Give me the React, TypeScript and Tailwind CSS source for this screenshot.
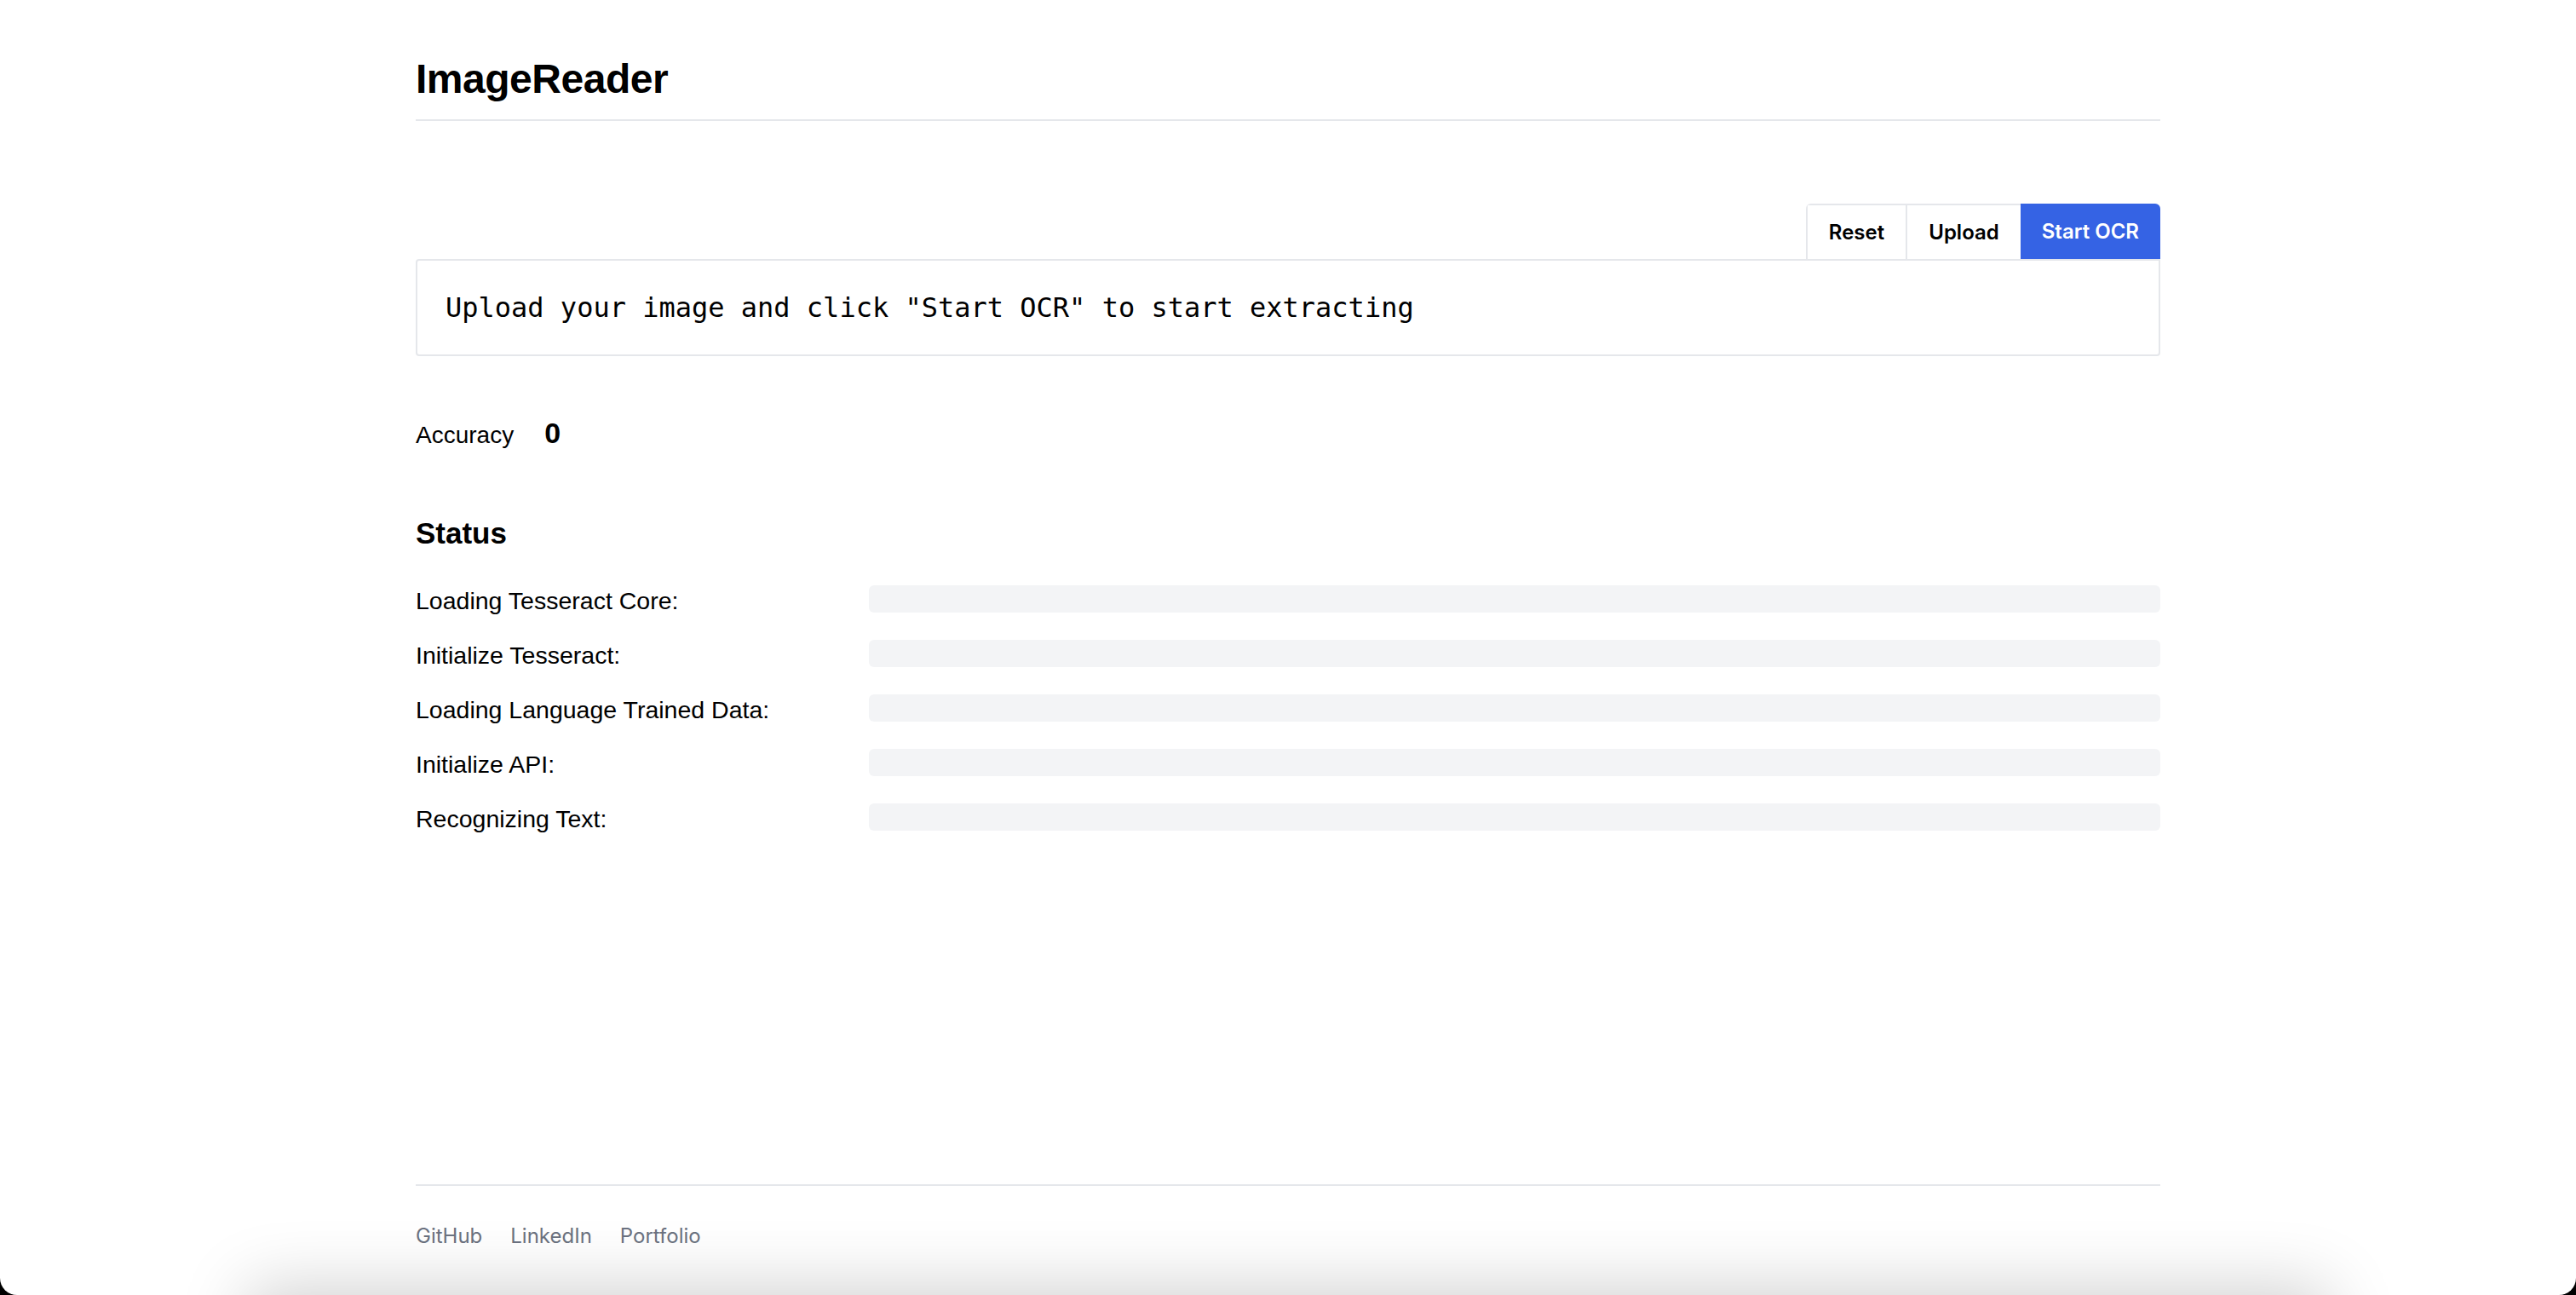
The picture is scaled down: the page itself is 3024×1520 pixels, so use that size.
import React from 'react'

const steps = [
  'Loading Tesseract Core:',
  'Initialize Tesseract:',
  'Loading Language Trained Data:',
  'Initialize API:',
  'Recognizing Text:'
]

const links = ['GitHub', 'LinkedIn', 'Portfolio']

const App: React.FC = () => {
  return (
    <div className="min-h-screen bg-black">
      <div className="relative flex h-[1520px] flex-col overflow-hidden rounded-b-[20px] bg-white font-['Liberation_Sans',Arial,sans-serif] text-black">
        <div className="mx-auto flex w-[2048px] flex-1 flex-col">
          <header className="border-b-2 border-[#e5e7eb] pt-[69px] pb-[23px]">
            <h1 className="text-[48px] font-bold leading-[48px] tracking-[-0.01em]">ImageReader</h1>
          </header>

          <div className="mt-[97px] flex justify-end">
            <div className="flex overflow-hidden rounded-t-[6px] font-['Inter',sans-serif]">
              <button className="flex h-[65px] items-center border-t-2 border-l-2 border-[#e5e7eb] px-[25px] text-[24px] font-semibold leading-[24px]">
                Reset
              </button>
              <button className="flex h-[65px] items-center border-t-2 border-l-2 border-[#e5e7eb] px-[25px] text-[24px] font-semibold leading-[24px]">
                Upload
              </button>
              <button className="flex h-[65px] items-center bg-[#3563e4] px-[25px] text-[24px] font-semibold leading-[24px] text-white">
                Start OCR
              </button>
            </div>
          </div>

          <div className="rounded-[4px] rounded-tr-none border-2 border-[#e5e7eb] px-[33px] py-[33px] font-['DejaVu_Sans_Mono',monospace] text-[32px] leading-[44px]">
            Upload your image and click "Start OCR" to start extracting
          </div>

          <div className="mt-[70px] flex items-baseline gap-[36px]">
            <span className="text-[28px] leading-[40px]">Accuracy</span>
            <span className="text-[34px] font-bold leading-[40px]">0</span>
          </div>

          <h2 className="mt-[75px] text-[35px] font-bold leading-[40px]">Status</h2>

          <div className="mt-[41px] flex flex-col gap-[32px]">
            {steps.map((step) => (
              <div key={step} className="flex h-[32px] items-center">
                <span className="w-[532px] pt-[4px] text-[28.5px] leading-[32px]">{step}</span>
                <div className="h-[32px] flex-1 rounded-[6px] bg-[#f3f4f6]" />
              </div>
            ))}
          </div>

          <footer className="mt-auto flex gap-[33px] border-t-2 border-[#e5e7eb] pt-[41px] pb-[51px] font-['Inter',sans-serif] text-[24px] leading-[36px] text-[#6b7280]">
            {links.map((link) => (
              <a key={link} href="#">
                {link}
              </a>
            ))}
          </footer>
        </div>

        <div className="pointer-events-none absolute left-[300px] right-[300px] top-full h-[100px] shadow-[0_0_80px_10px_rgba(0,0,0,0.18)]" />
      </div>
    </div>
  )
}

export default App
